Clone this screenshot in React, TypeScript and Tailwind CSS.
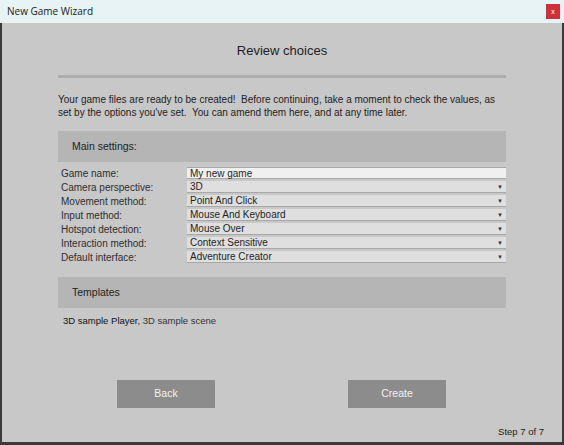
import React from "react";

const rows: { label: string; value: string; dropdown: boolean }[] = [
  { label: "Game name:", value: "My new game", dropdown: false },
  { label: "Camera perspective:", value: "3D", dropdown: true },
  { label: "Movement method:", value: "Point And Click", dropdown: true },
  { label: "Input method:", value: "Mouse And Keyboard", dropdown: true },
  { label: "Hotspot detection:", value: "Mouse Over", dropdown: true },
  { label: "Interaction method:", value: "Context Sensitive", dropdown: true },
  { label: "Default interface:", value: "Adventure Creator", dropdown: true },
];

const App = () => {
  return (
    <div className="w-[564px] h-[445px] flex flex-col bg-[#3a3a3a] overflow-hidden" style={{ fontFamily: "'Liberation Sans', Arial, sans-serif" }}>
      <div className="h-[23px] bg-[#e8f3f6] flex items-center justify-between pl-[7px] pr-[4px] shrink-0">
        <span className="text-[10px] text-[#1a1a1a]" style={{ fontFamily: "'Open Sans', 'Noto Sans', sans-serif" }}>
          New Game Wizard
        </span>
        <div className="w-[14px] h-[15px] bg-[#d1303a] flex items-center justify-center text-white text-[7px] leading-none">x</div>
      </div>
      <div className="flex-1 mx-[2px] mb-[3px] bg-[#c8c8c8] flex flex-col">
        <div className="text-center text-[13px] text-[#1e1e1e] mt-[18px] h-[20px] leading-[20px]">Review choices</div>
        <div className="mx-[56px] mt-[14px] h-[3px] bg-[#adadad]" />
        <p className="mx-[56px] mt-[15px] text-[10px] leading-[13px] text-[#222]">
          Your game files are ready to be created!&nbsp; Before continuing, take a moment to check the values, as set by the options you've set.&nbsp; You can amend them here, and at any time later.
        </p>
        <div className="mx-[56px] mt-[12px] h-[31px] bg-[#b5b5b5] flex items-center pl-[14px] text-[10.5px] text-[#222]">Main settings:</div>
        <div className="mx-[56px] mt-[5px] flex flex-col gap-[2px]">
          {rows.map(r => (
            <div key={r.label} className="flex items-center h-[12px]">
              <span className="w-[129px] pl-[3px] text-[10px] text-[#2e2e2e]">{r.label}</span>
              <div
                className={`flex-1 h-[12px] flex items-center justify-between pl-[3px] pr-[3px] text-[10px] text-[#1e1e1e] border-b border-[#a8a8a8] ${r.dropdown ? "bg-[#dfdfdf]" : "bg-[#f0f0f0] border-t"}`}
              >
                <span>{r.value}</span>
                {r.dropdown && <span className="text-[6px] text-[#333] leading-none">▼</span>}
              </div>
            </div>
          ))}
        </div>
        <div className="mx-[56px] mt-[14px] h-[31px] bg-[#b5b5b5] flex items-center pl-[14px] text-[10.5px] text-[#222]">Templates</div>
        <div className="mx-[56px] mt-[6px] pl-[5px] text-[9.5px] text-[#333]">
          <span className="text-[#111]">3D sample Player</span>, 3D sample scene
        </div>
        <div className="flex mt-[52px] pl-[115px] gap-[133px]">
          <div className="w-[98px] h-[28px] bg-[#8c8c8c] flex items-center justify-center text-[10.5px] text-[#f2f2f2]">Back</div>
          <div className="w-[98px] h-[28px] bg-[#8c8c8c] flex items-center justify-center text-[10.5px] text-[#f2f2f2]">Create</div>
        </div>
        <div className="mt-auto mb-[3px] self-end pr-[18px] text-[9.5px] text-[#222]">Step 7 of 7</div>
      </div>
    </div>
  );
};

export default App;
